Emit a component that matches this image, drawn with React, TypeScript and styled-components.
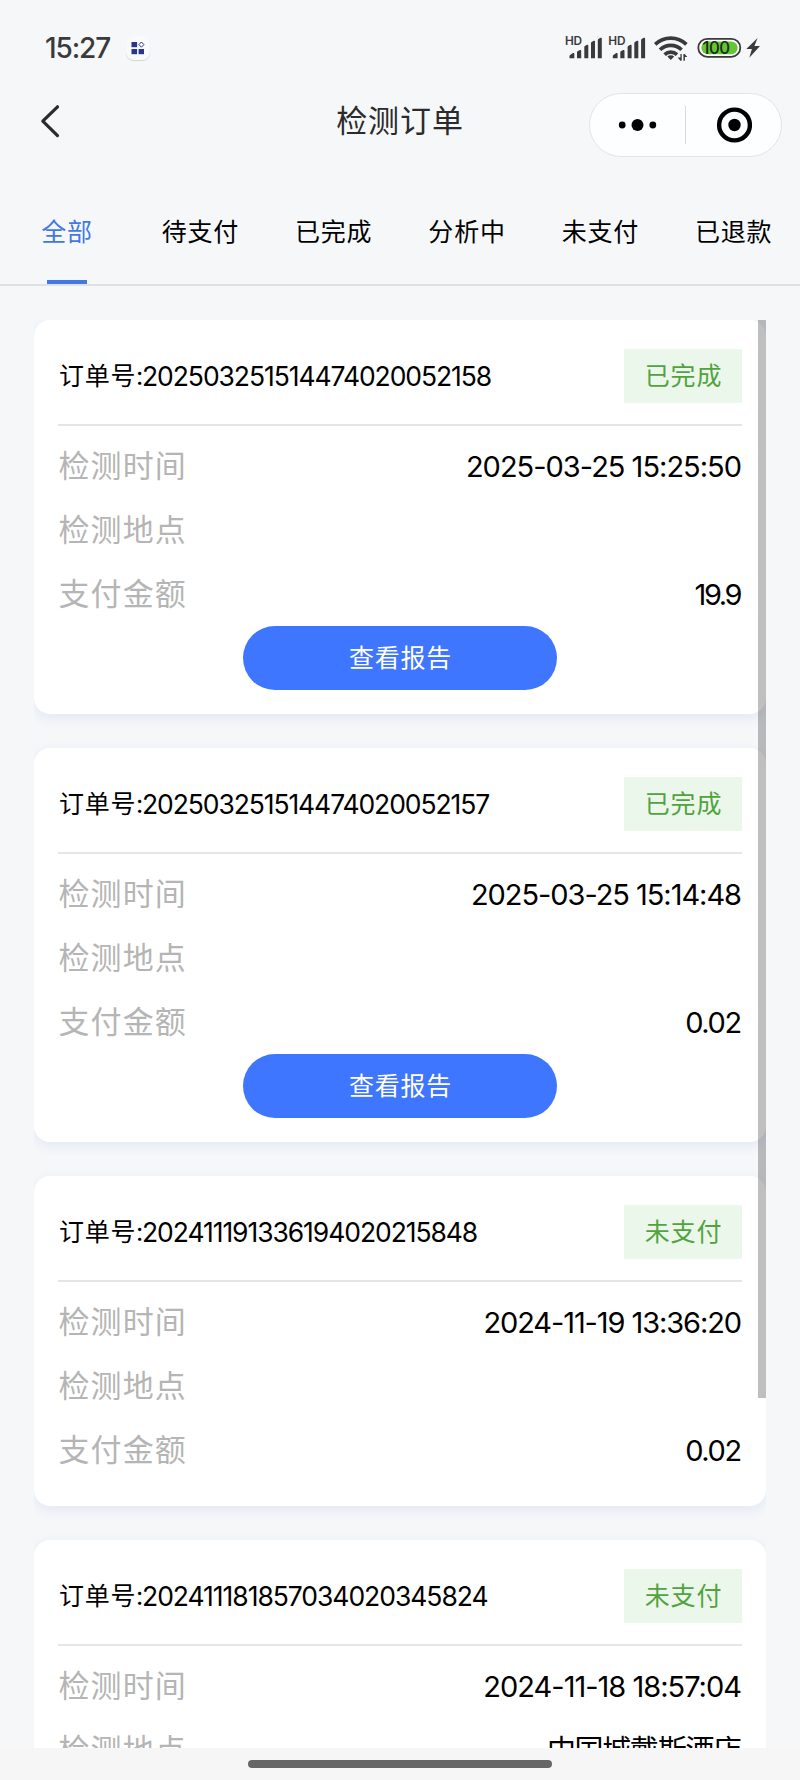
import React from 'react';
import styled, { createGlobalStyle } from 'styled-components';

const GlobalStyle = createGlobalStyle`
  * { box-sizing: border-box; }
  body {
    margin: 0;
    background: #f5f7f9;
    font-family: Inter, 'Noto Sans CJK SC', sans-serif;
    color: #000;
  }
`;

const Page = styled.div`
  width: 800px;
  height: 1780px;
  display: flex;
  flex-direction: column;
  overflow: hidden;
  background: #f5f7f9;
`;

const StatusBar = styled.div`
  height: 92px;
  flex: none;
  padding: 4px 40px 0 45px;
  display: flex;
  align-items: center;
  justify-content: space-between;
`;

const StatusGroup = styled.div`
  display: flex;
  align-items: center;
`;

const Clock = styled.span`
  width: 81px;
  font-size: 28px;
  line-height: 34px;
  font-weight: 500;
  letter-spacing: -1.1px;
  white-space: nowrap;
  color: #3a3a3c;
`;

const AppBadge = styled.span`
  width: 24px;
  height: 24px;
  border-radius: 8px;
  background: #f9fafc;
  box-shadow: 0 1px 1px rgba(0, 0, 0, 0.14);
  display: flex;
  align-items: center;
  justify-content: center;
`;

const NavBar = styled.div`
  height: 66px;
  flex: none;
  padding: 0 19px 0 40px;
  display: grid;
  grid-template-columns: 192px 1fr 192px;
  align-items: center;
`;

const BackIcon = styled.svg`
  display: block;
  margin-bottom: 8px;
`;

const Title = styled.h1`
  margin: 0 21px 8px 0;
  text-align: center;
  font-size: 31px;
  line-height: 40px;
  font-weight: 400;
  letter-spacing: 0.9px;
  color: #2b2b2b;
`;

const Capsule = styled.div`
  height: 64px;
  width: 193px;
  border: 1px solid #e3e4e6;
  border-radius: 32px;
  background: #fdfeff;
  display: grid;
  grid-template-columns: 95px 1px 95px;
  align-items: center;
  justify-items: center;
`;

const CapsuleDivider = styled.span`
  width: 1px;
  height: 38px;
  background: #d8d9db;
`;

const Tabs = styled.nav`
  height: 128px;
  flex: none;
  border-bottom: 2px solid #e0e1e3;
  display: grid;
  grid-template-columns: repeat(6, 1fr);
`;

const Tab = styled.div<{ $active?: boolean }>`
  padding-top: 54px;
  display: flex;
  flex-direction: column;
  align-items: center;
  justify-content: space-between;
  font-size: 25px;
  line-height: 40px;
  text-indent: 0.8px;
  letter-spacing: 0.8px;
  color: ${p => (p.$active ? '#4377e2' : '#000')};
  &::after {
    content: '';
    width: 40px;
    height: 4px;
    background: ${p => (p.$active ? '#4377e2' : 'transparent')};
  }
`;

const List = styled.main`
  position: relative;
  flex: 1;
  min-height: 0;
  margin: 34px 34px 0;
  overflow: hidden;
  display: flex;
  flex-direction: column;
  gap: 34px;
`;

const ScrollThumb = styled.div`
  position: absolute;
  top: 0;
  right: 0;
  width: 8px;
  height: 1078px;
  background: rgba(0, 0, 0, 0.25);
`;

const Card = styled.section`
  flex: none;
  padding: 0 24px 24px;
  border-radius: 16px;
  background: #fff;
  box-shadow: 0 4px 12px rgba(70, 110, 200, 0.1);
`;

const CardHeader = styled.header`
  height: 106px;
  margin-bottom: 8px;
  padding-top: 8px;
  border-bottom: 2px solid #e5e5e5;
  display: flex;
  align-items: center;
  justify-content: space-between;
`;

const OrderNo = styled.div`
  padding-left: 1px;
  display: flex;
  align-items: center;
  line-height: 40px;
  white-space: nowrap;
`;

const OrderPrefix = styled.span`
  font-size: 25px;
  letter-spacing: 0.7px;
  margin-right: -2px;
`;

const Digits = styled.span<{ $spacing: number }>`
  font-size: 26.5px;
  letter-spacing: ${p => p.$spacing}px;
`;

const Status = styled.span`
  width: 118px;
  height: 54px;
  padding-left: 1px;
  background: #ebf7ea;
  color: #52a33f;
  font-size: 25px;
  line-height: 54px;
  letter-spacing: 0.8px;
  text-align: center;
`;

const Row = styled.div`
  height: 64px;
  display: flex;
  align-items: center;
  justify-content: space-between;
`;

const Label = styled.span`
  padding-left: 0.5px;
  font-size: 31px;
  line-height: 44px;
  letter-spacing: 1.1px;
  color: #b5b5b5;
`;

const Value = styled.span<{ $spacing: number }>`
  padding-top: 1px;
  font-size: 29px;
  line-height: 44px;
  letter-spacing: ${p => p.$spacing}px;
  margin-right: ${p => 0.4 - p.$spacing * 0.6}px;
`;

const ReportButton = styled.button`
  display: block;
  width: 314px;
  height: 64px;
  margin: 0 auto;
  padding: 0 0 0 1px;
  border: 0;
  border-radius: 32px;
  background: #3f76ff;
  color: #fff;
  font-family: inherit;
  font-size: 25px;
  line-height: 64px;
  letter-spacing: 0.8px;
`;

const HomeBar = styled.footer`
  height: 32px;
  flex: none;
  background: #f6f6f6;
  display: flex;
  align-items: center;
  justify-content: center;
`;

const HomeHandle = styled.span`
  width: 304px;
  height: 8px;
  border-radius: 4px;
  background: #666;
`;

interface Order {
  no: string;
  noSpacing: number;
  status: string;
  time: string;
  timeSpacing: number;
  place?: string;
  amount: string;
  amountSpacing: number;
  report?: boolean;
}

const orders: Order[] = [
  { no: '202503251514474020052158', noSpacing: -1.07, status: '已完成', time: '2025-03-25 15:25:50', timeSpacing: -1, amount: '19.9', amountSpacing: -2.4, report: true },
  { no: '202503251514474020052157', noSpacing: -1.1, status: '已完成', time: '2025-03-25 15:14:48', timeSpacing: -1.05, amount: '0.02', amountSpacing: -1.4, report: true },
  { no: '202411191336194020215848', noSpacing: -1.07, status: '未支付', time: '2024-11-19 13:36:20', timeSpacing: -1.1, amount: '0.02', amountSpacing: -1.4 },
  { no: '202411181857034020345824', noSpacing: -1.04, status: '未支付', time: '2024-11-18 18:57:04', timeSpacing: -1, place: '中国城戴斯酒店', amount: '0.02', amountSpacing: -1.4 },
];

const tabs = ['全部', '待支付', '已完成', '分析中', '未支付', '已退款'];

const StatusIcons = () => (
  <svg width="196" height="32" viewBox="564 32 196 32" fill="#3a3a3c">
    {[0, 43.3].map(dx => (
      <g key={dx} transform={`translate(${dx} 0)`}>
        <text x="565" y="45" fontSize="11.8" fontWeight="600" fontFamily="Inter, sans-serif" letterSpacing="-0.2">HD</text>
        <path d="M569.5 58.3v-2.4q0-.6.6-.9l2.9-1.9q1.3-.6 1.3.6v4.6zM577 58.3v-6.1q0-.7.6-1l2.3-1.1q1.3-.5 1.3.7v7.5zM584.3 58.3V47q0-.7.6-1l2.1-1.2q1.3-.5 1.3.7v12.8zM591 58.3V43q0-.7.6-1l2.1-1.2q1.3-.5 1.3.7v16.8zM597.8 58.3V40q0-.7.6-1l2.1-1.2q1.3-.5 1.3.7v19.8z" />
      </g>
    ))}
    <g fill="none" stroke="#3a3a3c" strokeWidth="3.6">
      <path d="M655.2 44.4a22.5 22.5 0 0 1 31.2 0" />
      <path d="M660 49.8a15.5 15.5 0 0 1 21.6 0" />
      <path d="M664.6 54.6a9 9 0 0 1 12.4 0" />
    </g>
    <path d="M670.8 60l-3.4-3.4a4.9 4.9 0 0 1 6.8 0z" />
    <path d="M680.4 54v3.5h-2.8l2.8 3.2h1.3V54zM683.4 60.7V54h1.3l2.6 3h-2.4v3.7z" />
    <rect x="698.3" y="38.8" width="42" height="18" rx="9" fill="#fff" stroke="#3a3a3c" strokeWidth="1.8" />
    <rect x="701.3" y="41.4" width="36.4" height="12.8" rx="6.4" fill="#62c636" />
    <text x="702.6" y="53.8" fontSize="16.8" fontWeight="500" fontFamily="Inter, sans-serif" fill="#1c2b16" letterSpacing="-0.6">100</text>
    <path d="M757.6 38L746.3 49h5.6l-2.6 8.8L760 46h-5.6z" />
  </svg>
);

const OrderCard = ({ order }: { order: Order }) => (
  <Card>
    <CardHeader>
      <OrderNo>
        <OrderPrefix>订单号:</OrderPrefix>
        <Digits $spacing={order.noSpacing}>{order.no}</Digits>
      </OrderNo>
      <Status>{order.status}</Status>
    </CardHeader>
    <Row>
      <Label>检测时间</Label>
      <Value $spacing={order.timeSpacing}>{order.time}</Value>
    </Row>
    <Row>
      <Label>检测地点</Label>
      <Value $spacing={-1.3}>{order.place}</Value>
    </Row>
    <Row>
      <Label>支付金额</Label>
      <Value $spacing={order.amountSpacing}>{order.amount}</Value>
    </Row>
    {order.report && <ReportButton>查看报告</ReportButton>}
  </Card>
);

export default function App() {
  return (
    <Page>
      <GlobalStyle />
      <StatusBar>
        <StatusGroup>
          <Clock>15:27</Clock>
          <AppBadge>
            <svg width="14" height="14" viewBox="0 0 14 14" fill="#26358f">
              <rect x="0.5" y="1" width="5.6" height="5.2" />
              <rect x="0.5" y="8" width="5.6" height="5.2" />
              <rect x="7.6" y="8" width="5.4" height="5.2" />
              <path d="M10.4 1l2.5 2.6-2.5 2.6-2.5-2.6z" fill="#fff" stroke="#26358f" strokeWidth="1" />
            </svg>
          </AppBadge>
        </StatusGroup>
        <StatusIcons />
      </StatusBar>
      <NavBar>
        <BackIcon width="20" height="34" viewBox="0 0 20 34" fill="none" stroke="#2b2b2b" strokeWidth="3.2" strokeLinecap="round" strokeLinejoin="round">
          <path d="M17.5 2.8L2.8 17.2L17.5 31.6" />
        </BackIcon>
        <Title>检测订单</Title>
        <Capsule>
          <svg width="40" height="14" viewBox="0 0 40 14">
            <circle cx="4.2" cy="7" r="3.4" />
            <circle cx="19.5" cy="7" r="6" />
            <circle cx="34.8" cy="7" r="3.4" />
          </svg>
          <CapsuleDivider />
          <svg width="36" height="36" viewBox="0 0 36 36">
            <circle cx="18.5" cy="18" r="15.4" fill="none" stroke="#000" strokeWidth="4.4" />
            <circle cx="18.5" cy="18" r="6.2" />
          </svg>
        </Capsule>
      </NavBar>
      <Tabs>
        {tabs.map((t, i) => (
          <Tab key={t} $active={i === 0}>{t}</Tab>
        ))}
      </Tabs>
      <List>
        {orders.map(o => (
          <OrderCard key={o.no} order={o} />
        ))}
        <ScrollThumb />
      </List>
      <HomeBar>
        <HomeHandle />
      </HomeBar>
    </Page>
  );
}
